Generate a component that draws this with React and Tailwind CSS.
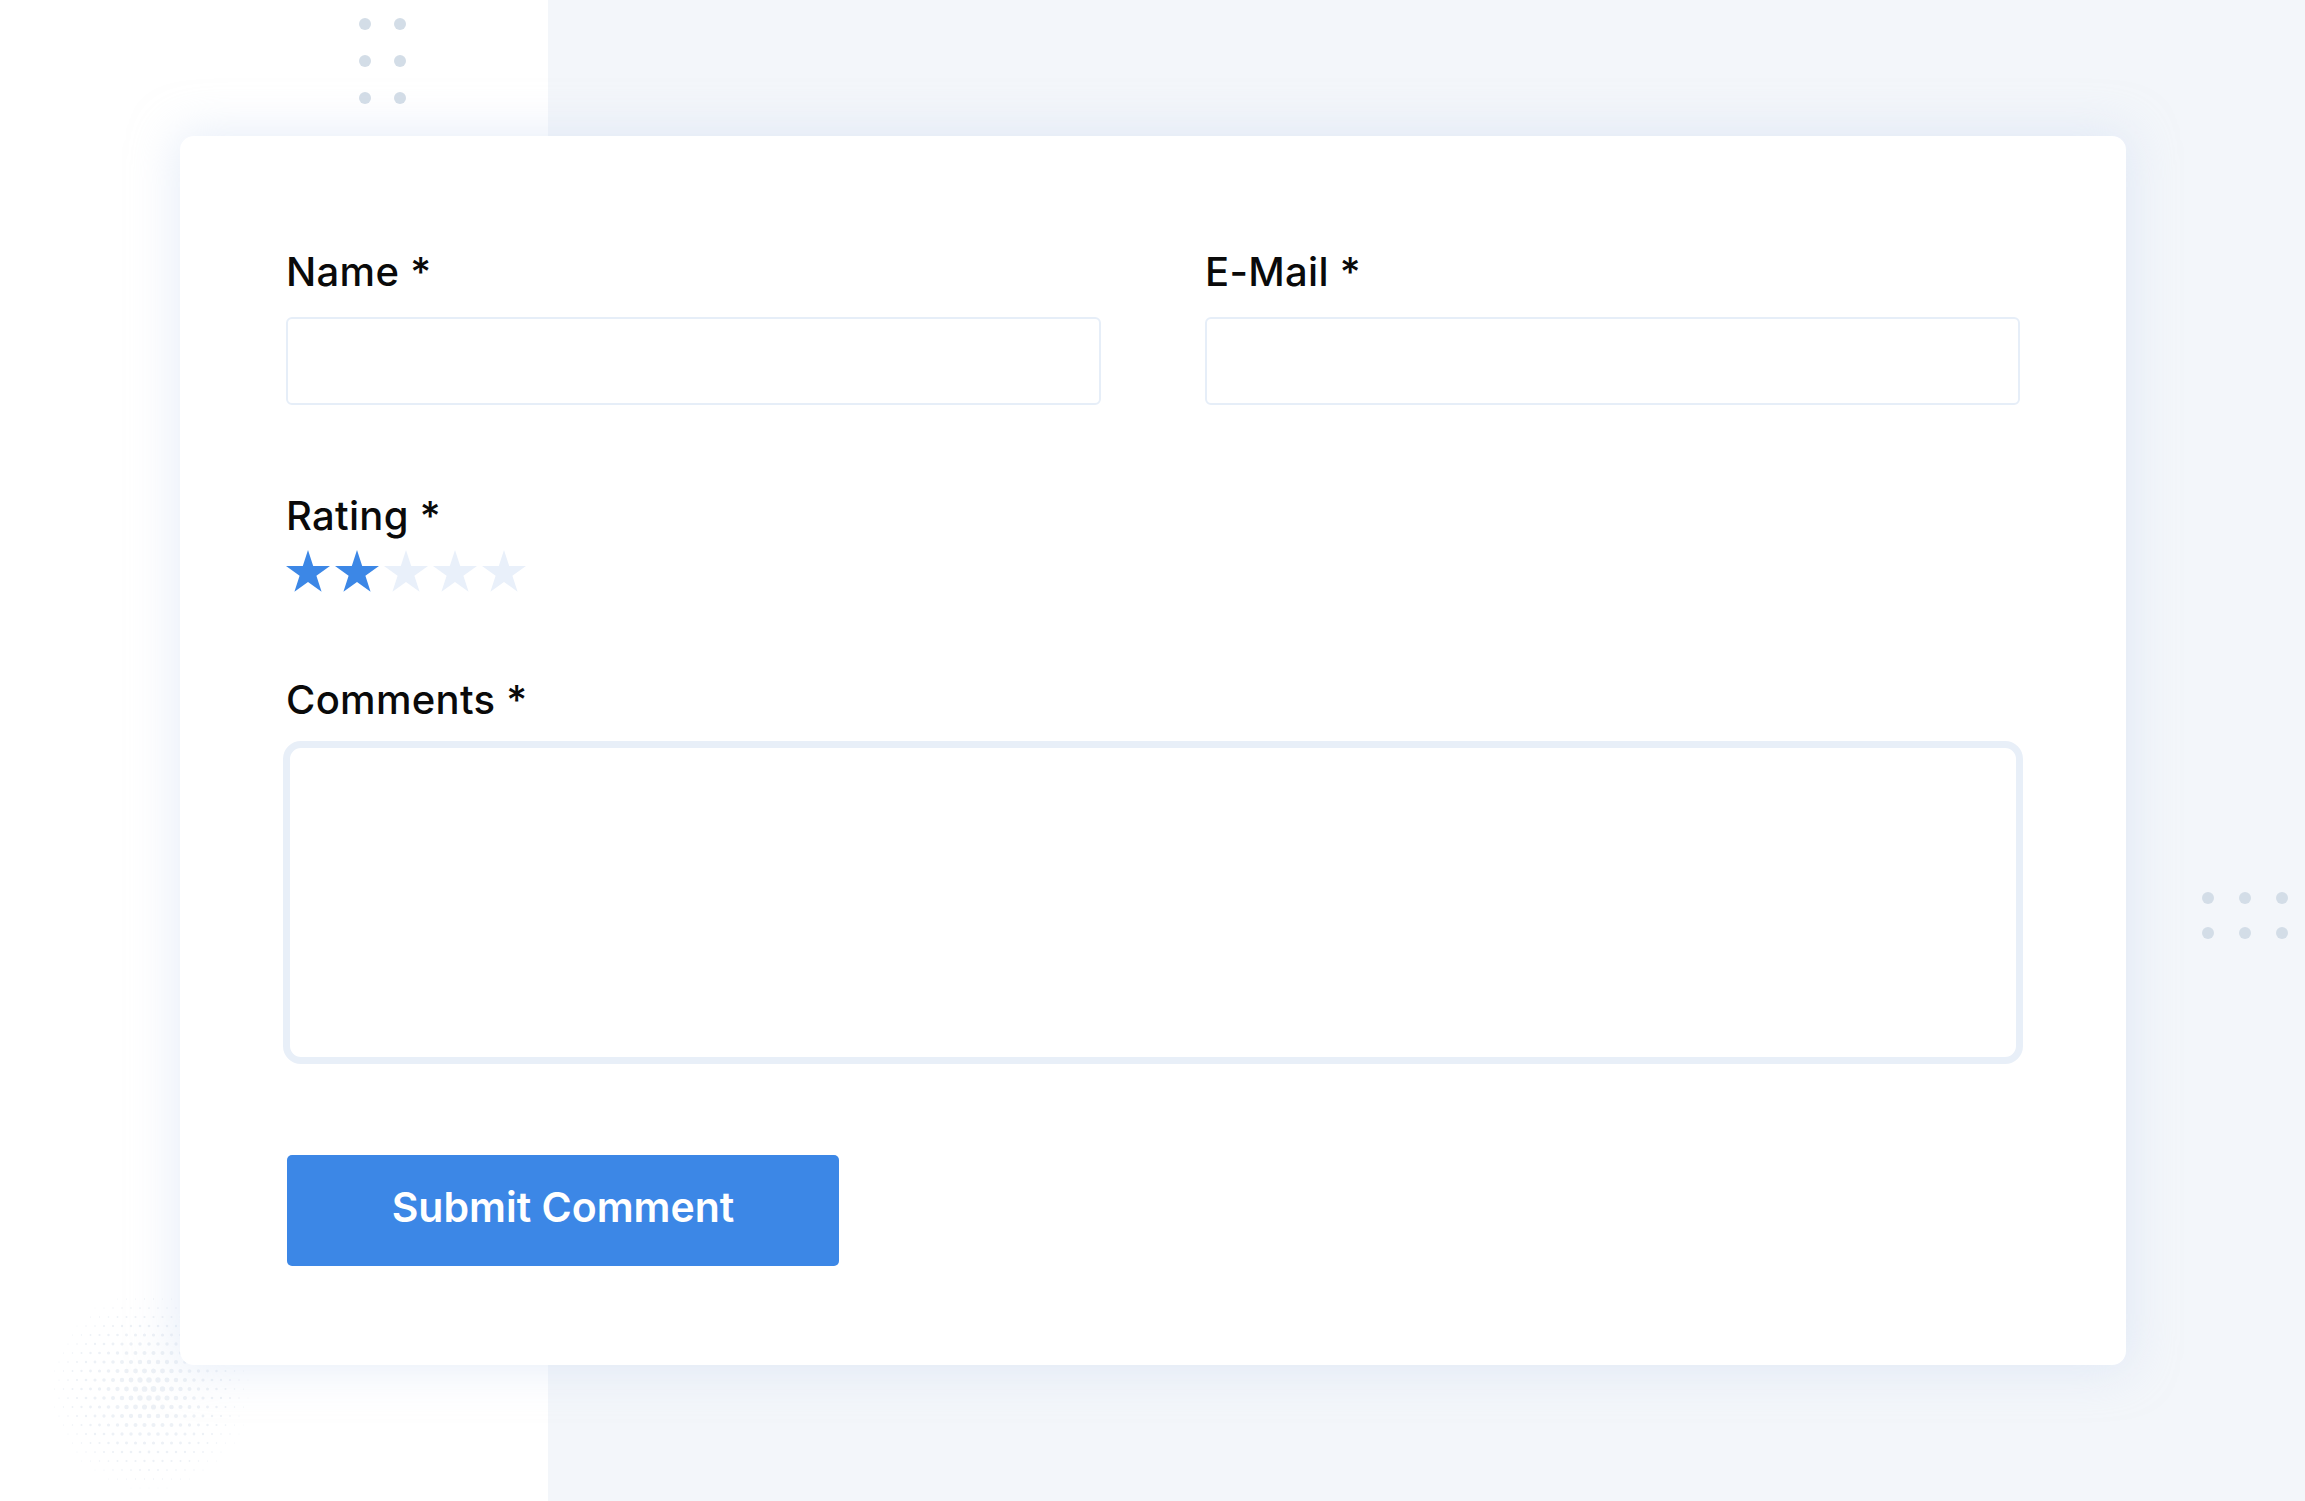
import React from "react";

const STAR_POINTS =
  "22,0 27.19,15.99 43.97,15.99 30.4,25.86 35.58,41.82 22,31.96 8.42,41.82 13.6,25.86 0.03,15.99 16.81,15.99";

function Star({ filled }) {
  return (
    <svg width="44" height="43" viewBox="0 0 44 43" className="block">
      <polygon points={STAR_POINTS} fill={filled ? "#3c87e6" : "#e9f0fa"} />
    </svg>
  );
}

function Dot() {
  return <span className="block w-[12px] h-[12px] rounded-full bg-[#d3dde7]" />;
}

function Halftone() {
  const dots = [];
  const R = 100;
  const step = 9;
  for (let y = -R; y <= R; y += step) {
    for (let x = -R; x <= R; x += step) {
      const ox = x + ((Math.round((y + R) / step) % 2) * step) / 2;
      const d = Math.sqrt(ox * ox + y * y);
      if (d > R) continue;
      const r = 2.6 * (1 - d / R) + 0.4;
      dots.push(<circle key={`${x}-${y}`} cx={ox + R} cy={y + R} r={r} fill="#edf1f6" />);
    }
  }
  return (
    <svg width={2 * R} height={2 * R} viewBox={`0 0 ${2 * R} ${2 * R}`} className="absolute left-[50px] top-[1290px]">
      {dots}
    </svg>
  );
}

function Label({ children }) {
  return (
    <div className="text-[40px] leading-none font-medium text-[#0a0a0a] tracking-[0.3px]">{children}</div>
  );
}

export default function App() {
  return (
    <div className="relative w-full h-[1501px] overflow-hidden bg-[linear-gradient(to_right,#ffffff_548px,#f3f6fa_548px)] font-['Inter',sans-serif]">
      <Halftone />
      <div className="absolute left-[359px] top-[18px] grid grid-cols-2 gap-x-[23px] gap-y-[25px]">
        <Dot /><Dot /><Dot /><Dot /><Dot /><Dot />
      </div>
      <div className="absolute left-[2202px] top-[892px] grid grid-cols-3 gap-x-[25px] gap-y-[23px]">
        <Dot /><Dot /><Dot /><Dot /><Dot /><Dot />
      </div>

      <div className="relative ml-[180px] pt-[136px]">
        <div className="w-[1946px] h-[1229px] bg-white rounded-[14px] shadow-[0_0_45px_4px_rgba(208,222,243,0.5)] px-[106px] pt-[116px]">
          <div className="grid grid-cols-2 gap-x-[104px]">
            <div>
              <Label>Name *</Label>
              <div className="mt-[25px] h-[88px] rounded-[6px] border-2 border-[#e6eef8] bg-white" />
            </div>
            <div>
              <Label>E-Mail *</Label>
              <div className="mt-[25px] h-[88px] rounded-[6px] border-2 border-[#e6eef8] bg-white" />
            </div>
          </div>

          <div className="mt-[91px]">
            <Label>Rating *</Label>
            <div className="mt-[14px] flex gap-[5px]">
              <Star filled />
              <Star filled />
              <Star />
              <Star />
              <Star />
            </div>
          </div>

          <div className="mt-[87px]">
            <Label>Comments *</Label>
            <div className="mt-[21px] -mx-[3px] h-[323px] rounded-[18px] border-[7px] border-[#e8eff8] bg-white" />
          </div>

          <button className="mt-[91px] ml-[1px] w-[552px] h-[111px] rounded-[5px] bg-[#3c87e6] text-white text-[41px] font-semibold leading-none flex items-center justify-center pb-[6px]">
            Submit Comment
          </button>
        </div>
      </div>
    </div>
  );
}
